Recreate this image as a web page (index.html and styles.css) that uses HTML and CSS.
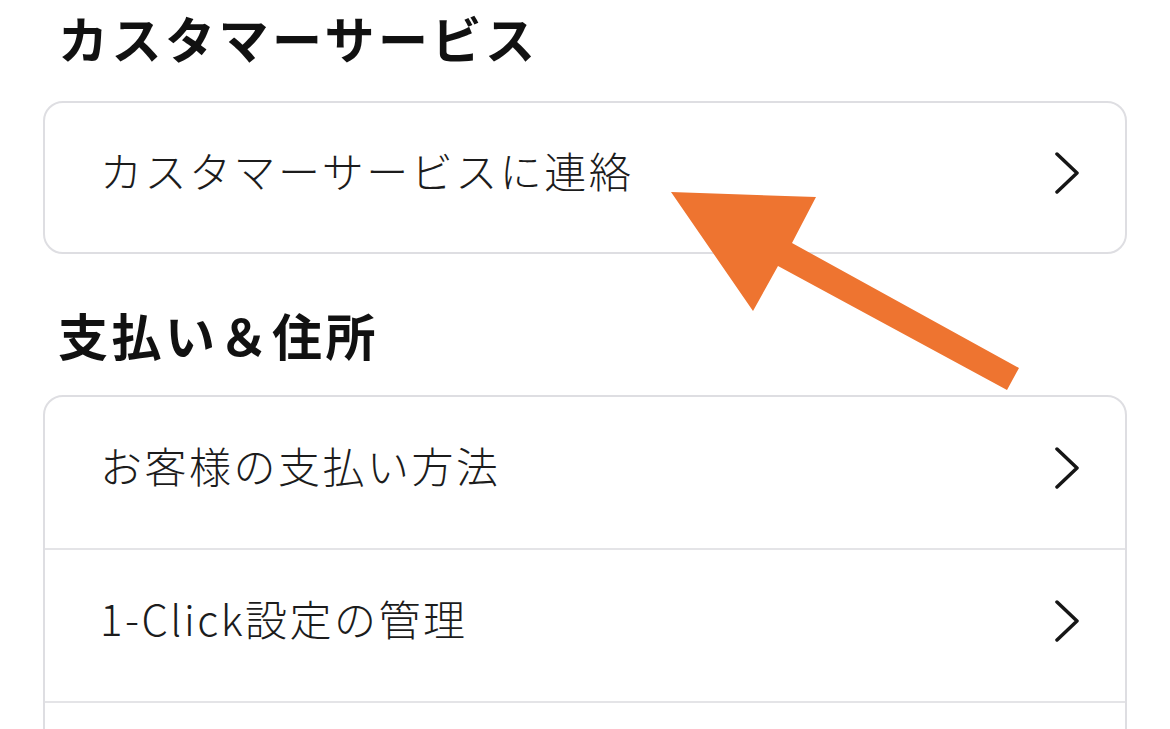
FILE: index.html
```html
<!DOCTYPE html>
<html lang="ja">
<head>
    <meta charset="UTF-8">
    <meta name="viewport" content="width=device-width, initial-scale=1.0">
    <title>アカウントサービス</title>
    <link rel="stylesheet" href="styles.css">
</head>
<body>
    <div class="page">
        <h2 class="section-title">カスタマーサービス</h2>
        <div class="card">
            <div class="row">
                <span class="row-label">カスタマーサービスに連絡</span>
                <svg class="chevron" width="24" height="42" viewBox="0 0 24 42"><polyline points="2,2 22,21 2,40" /></svg>
            </div>
        </div>

        <h2 class="section-title">支払い＆住所</h2>
        <div class="card">
            <div class="row">
                <span class="row-label">お客様の支払い方法</span>
                <svg class="chevron" width="24" height="42" viewBox="0 0 24 42"><polyline points="2,2 22,21 2,40" /></svg>
            </div>
            <div class="row">
                <span class="row-label">1-Click設定の管理</span>
                <svg class="chevron" width="24" height="42" viewBox="0 0 24 42"><polyline points="2,2 22,21 2,40" /></svg>
            </div>
            <div class="row row-more"></div>
        </div>
    </div>

    <!-- annotation arrow -->
    <svg class="pointer" width="1170" height="729" viewBox="0 0 1170 729">
        <polygon points="671,192 816,197 792,243 1019,368 1007,390 778,266 753,311" />
    </svg>
</body>
</html>
```

FILE: styles.css
```css
body {
    margin: 0;
    background: #fff;
    color: #1a1a1a;
    font-family: "Noto Sans CJK JP", "Noto Sans", sans-serif;
    overflow: hidden;
}
.page {
    padding: 0 43px;
}
.section-title {
    margin: 0 0 21px;
    padding: 0 0 6px 15px;
    height: 74px;
    font-size: 50px;
    line-height: 74px;
    font-weight: 700;
    letter-spacing: 3.5px;
    color: #111;
}
.card + .section-title {
    margin-top: 43px;
    margin-bottom: 18px;
}
.card {
    border: 2px solid #dedee2;
    border-radius: 20px;
    overflow: hidden;
}
.row {
    display: flex;
    align-items: center;
    justify-content: space-between;
    height: 141px;
    padding: 0 46px 10px 55px;
    border-bottom: 2px solid #e4e4e7;
}
.row:last-child {
    border-bottom: none;
    height: 139px;
}
.row-label {
    font-size: 42px;
    line-height: 50px;
    padding-bottom: 6px;
    font-weight: 300;
    letter-spacing: 2.5px;
    color: #1c1c1c;
}
.chevron polyline {
    fill: none;
    stroke: #161616;
    stroke-width: 3.5;
    stroke-linecap: round;
    stroke-linejoin: round;
}
.pointer {
    position: absolute;
    left: 0;
    top: 0;
}
.pointer polygon {
    fill: #ee7430;
}
```
